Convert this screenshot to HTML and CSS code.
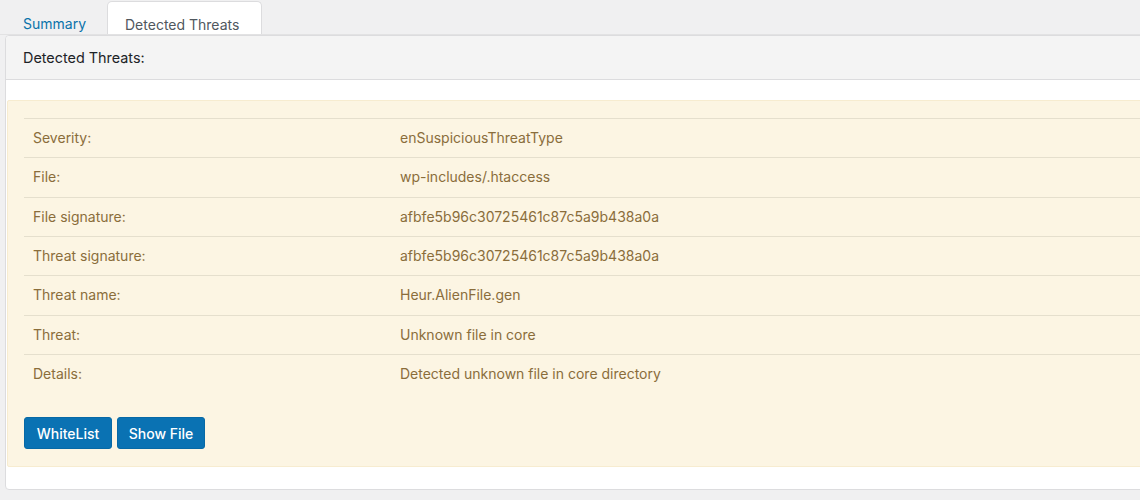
FILE: index.html
```html
<!DOCTYPE html>
<html>
<head>
<meta charset="utf-8">
<link rel="stylesheet" href="styles.css">
</head>
<body>
<div class="page">
  <nav class="tabs">
    <a class="tab-link" href="#">Summary</a>
    <span class="tab tab-active">Detected Threats</span>
  </nav>
  <section class="panel">
    <header class="panel-head">Detected Threats:</header>
    <div class="panel-body">
      <div class="threat">
        <div class="threat-table">
          <div class="row"><span class="label">Severity:</span><span class="value">enSuspiciousThreatType</span></div>
          <div class="row"><span class="label">File:</span><span class="value">wp-includes/.htaccess</span></div>
          <div class="row"><span class="label">File signature:</span><span class="value">afbfe5b96c30725461c87c5a9b438a0a</span></div>
          <div class="row"><span class="label">Threat signature:</span><span class="value">afbfe5b96c30725461c87c5a9b438a0a</span></div>
          <div class="row"><span class="label">Threat name:</span><span class="value">Heur.AlienFile.gen</span></div>
          <div class="row"><span class="label">Threat:</span><span class="value">Unknown file in core</span></div>
          <div class="row"><span class="label">Details:</span><span class="value">Detected unknown file in core directory</span></div>
        </div>
        <div class="actions">
          <button class="btn">WhiteList</button>
          <button class="btn">Show File</button>
        </div>
      </div>
    </div>
  </section>
</div>
</body>
</html>
```
FILE: styles.css
```css
html, body {
  margin: 0;
  padding: 0;
  background: #f0f0f1;
  overflow: hidden;
}
body {
  font-family: Inter, "Liberation Sans", Arial, sans-serif;
  font-size: 14px;
  color: #1d2327;
}
.page {
  width: 1160px;
}
.tabs {
  display: flex;
  align-items: flex-end;
  height: 35px;
  padding-left: 23px;
  box-sizing: border-box;
  border-bottom: 1px solid #e2e2e3;
}
.tab-link {
  color: #0a73aa;
  text-decoration: none;
  line-height: 20px;
  padding-bottom: 0;
  margin-right: 21px;
}
.tab {
  display: block;
  box-sizing: border-box;
  height: 33px;
  padding: 13px 17px 0 17px;
  line-height: 20px;
  color: #50575e;
  background: #fff;
  border: 1px solid #dcdcde;
  border-bottom: none;
  border-radius: 5px 5px 0 0;
  width: 155px;
}
.panel {
  margin-left: 5px;
  background: #fff;
  border: 1px solid #dcdcde;
  border-radius: 4px;
}
.panel-head {
  height: 44px;
  box-sizing: border-box;
  padding: 0 17px;
  display: flex;
  align-items: center;
  background: #f4f4f4;
  border-bottom: 1px solid #dcdcde;
  border-radius: 4px 4px 0 0;
  font-size: 14.4px;
}
.panel-body {
  padding: 20px 1px 22px 1px;
}
.threat {
  background: #fcf5e3;
  border: 1px solid #f7ecd0;
  border-radius: 2px;
  padding: 17px 17px 17px 16px;
}
.threat-table {
  color: #8a6d3b;
}
.row {
  display: grid;
  grid-template-columns: 367px 1fr;
  align-items: center;
  height: 39.33px;
  box-sizing: border-box;
  border-top: 1px solid #e5dfcd;
  line-height: 18px;
}
.label, .value {
  padding: 0 9px;
}
.actions {
  display: flex;
  gap: 5px;
  margin-top: 24px;
}
.btn {
  font-family: inherit;
  font-size: 14px;
  font-weight: 500;
  color: #fff;
  background: #0a72b3;
  border: 1px solid #0769a6;
  border-radius: 3px;
  height: 32px;
  width: 88px;
  padding: 0;
}
```
